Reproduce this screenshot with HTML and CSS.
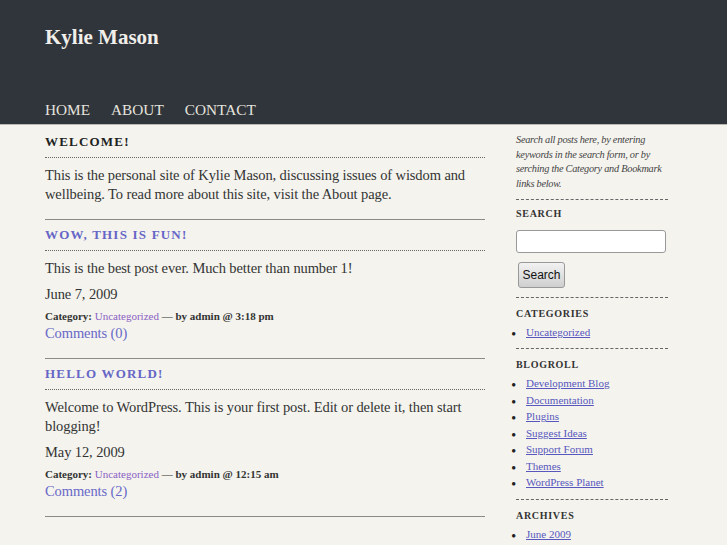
FILE: index.html
```html
<!DOCTYPE html>
<html>
<head>
<meta charset="utf-8">
<title>Kylie Mason</title>
<link rel="stylesheet" href="styles.css">
</head>
<body>
<header class="site-header">
  <h1 class="site-title">Kylie Mason</h1>
  <nav class="nav">
    <a href="#">Home</a>
    <a href="#">About</a>
    <a href="#">Contact</a>
  </nav>
</header>
<div class="page">
  <main class="content">
    <article class="post">
      <h2 class="post-title">Welcome!</h2>
      <p class="post-body">This is the personal site of Kylie Mason, discussing issues of wisdom and wellbeing. To read more about this site, visit the About page.</p>
    </article>
    <article class="post">
      <h2 class="post-title"><a href="#">Wow, this is fun!</a></h2>
      <p class="post-body">This is the best post ever. Much better than number 1!</p>
      <div class="post-date">June 7, 2009</div>
      <div class="post-meta">Category: <a class="cat" href="#">Uncategorized</a> — by admin @ 3:18 pm</div>
      <a class="comments" href="#">Comments (0)</a>
    </article>
    <article class="post">
      <h2 class="post-title"><a href="#">Hello world!</a></h2>
      <p class="post-body">Welcome to WordPress. This is your first post. Edit or delete it, then start blogging!</p>
      <div class="post-date">May 12, 2009</div>
      <div class="post-meta">Category: <a class="cat" href="#">Uncategorized</a> — by admin @ 12:15 am</div>
      <a class="comments" href="#">Comments (2)</a>
    </article>
  </main>
  <aside class="sidebar">
    <div class="widget intro">
      <p>Search all posts here, by entering keywords in the search form, or by serching the Category and Bookmark links below.</p>
    </div>
    <div class="widget search-widget">
      <h3 class="widget-title">Search</h3>
      <form class="search-form">
        <input class="search-input" type="text">
        <button class="search-btn" type="button">Search</button>
      </form>
    </div>
    <div class="widget">
      <h3 class="widget-title">Categories</h3>
      <ul class="links">
        <li><a href="#">Uncategorized</a></li>
      </ul>
    </div>
    <div class="widget">
      <h3 class="widget-title">Blogroll</h3>
      <ul class="links">
        <li><a href="#">Development Blog</a></li>
        <li><a href="#">Documentation</a></li>
        <li><a href="#">Plugins</a></li>
        <li><a href="#">Suggest Ideas</a></li>
        <li><a href="#">Support Forum</a></li>
        <li><a href="#">Themes</a></li>
        <li><a href="#">WordPress Planet</a></li>
      </ul>
    </div>
    <div class="widget">
      <h3 class="widget-title">Archives</h3>
      <ul class="links">
        <li><a href="#">June 2009</a></li>
      </ul>
    </div>
  </aside>
</div>
</body>
</html>
```
FILE: styles.css
```css
html, body {
  margin: 0;
  padding: 0;
}
body {
  background: #f4f3ee;
  color: #333;
  font-family: "Liberation Serif", "Times New Roman", serif;
  font-size: 14.5px;
  letter-spacing: -0.1px;
  line-height: 19px;
}
a { color: #6868c8; text-decoration: none; }

.site-header {
  background: #30343b;
  height: 124px;
  border-bottom: 1px solid #b9b8b2;
  padding: 0 45px;
  box-sizing: content-box;
  display: flex;
  flex-direction: column;
}
.site-title {
  margin: 0;
  padding-top: 25px;
  font-size: 21px;
  line-height: 24px;
  font-weight: bold;
  letter-spacing: 0;
  color: #f1efe9;
}
.nav {
  margin-top: auto;
  padding-bottom: 4px;
  display: flex;
  gap: 21px;
}
.nav a {
  color: #e6e4de;
  text-transform: uppercase;
  font-size: 15.3px;
  letter-spacing: 0;
  line-height: 20px;
}

.page {
  display: flex;
  padding-left: 45px;
}
.content {
  width: 440px;
  padding-top: 2px;
}
.post {
  padding: 6px 0 15px;
  border-bottom: 1px solid #8a8a86;
}
.post-title {
  margin: 0;
  font-size: 13px;
  line-height: 18px;
  letter-spacing: 1.2px;
  text-transform: uppercase;
  font-weight: bold;
  color: #222;
  padding-bottom: 6px;
  border-bottom: 1px dotted #666;
}
.post-title a { color: #6666c6; }
.post-body {
  margin: 8px 0 0;
}
.post-date {
  margin-top: 7px;
}
.post-meta {
  margin-top: 5px;
  font-size: 11px;
  line-height: 14px;
  font-weight: bold;
  letter-spacing: 0;
  color: #333;
}
.post-meta .cat {
  color: #8a60c4;
  font-weight: normal;
}
.comments {
  display: block;
  margin-top: 1px;
}

.sidebar {
  margin-left: 31px;
  width: 152px;
}
.widget {
  border-bottom: 1px dashed #666;
  padding: 9px 0 8px;
}
.intro {
  padding: 8px 0 7px;
}
.intro p {
  margin: 0;
  font-style: italic;
  font-size: 10.3px;
  letter-spacing: -0.25px;
  line-height: 14.7px;
  color: #444;
}
.search-widget {
  padding: 7px 0 9px;
}
.widget-title {
  margin: 0;
  font-size: 10px;
  line-height: 14px;
  letter-spacing: 0.7px;
  text-transform: uppercase;
  font-weight: bold;
  color: #333;
}
.search-form {
  margin-top: 9px;
  display: flex;
  flex-direction: column;
  align-items: flex-start;
  gap: 9px;
}
.search-input {
  box-sizing: border-box;
  width: 150px;
  height: 23px;
  margin: 0;
  border: 1px solid #999;
  border-radius: 3px;
  background: #fff;
}
.search-btn {
  margin-left: 2px;
  height: 26px;
  width: 47px;
  padding: 0;
  font-family: "Liberation Sans", Arial, sans-serif;
  font-size: 12px;
  letter-spacing: 0;
  color: #111;
  border: 1px solid #999;
  border-radius: 3px;
  background: linear-gradient(#f2f2f2, #cfcfcf);
}
.links {
  margin: 3px 0 0;
  padding-left: 10px;
  list-style: disc;
}
.links li {
  font-size: 11px;
  letter-spacing: 0;
  line-height: 16.5px;
}
.links li::marker {
  content: "\25CF\00a0\00a0\00a0\00a0\00a0";
  font-size: 8px;
  color: #222;
}
.links a {
  color: #5757bd;
  text-decoration: underline;
}
```
